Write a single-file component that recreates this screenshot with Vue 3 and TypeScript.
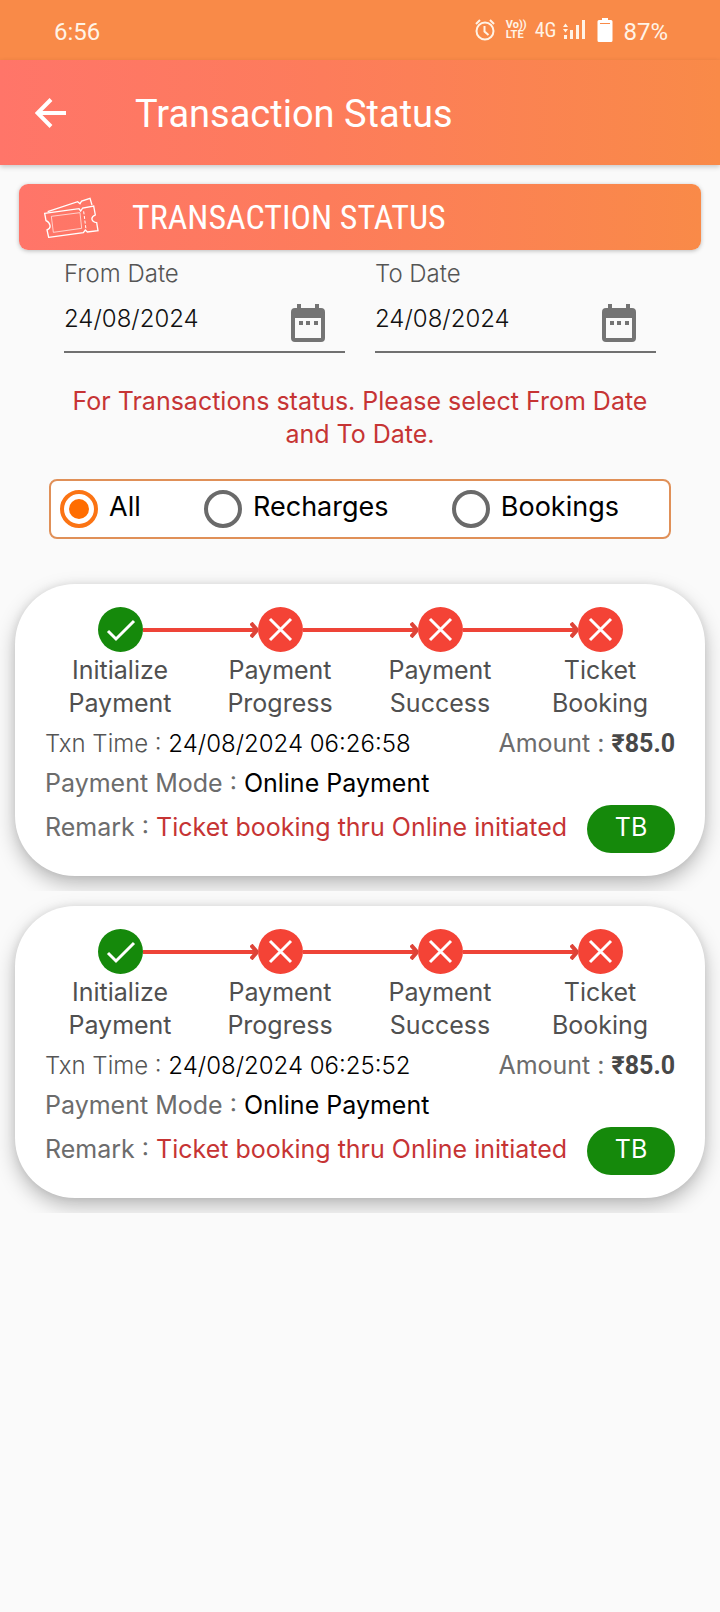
<script setup lang="ts">
import { ref } from 'vue'

interface Step {
  top: string
  bottom: string
  done: boolean
}

interface Transaction {
  time: string
  amount: string
  mode: string
  remark: string
  tag: string
  steps: Step[]
}

const steps: Step[] = [
  { top: 'Initialize', bottom: 'Payment', done: true },
  { top: 'Payment', bottom: 'Progress', done: false },
  { top: 'Payment', bottom: 'Success', done: false },
  { top: 'Ticket', bottom: 'Booking', done: false },
]

const fromDate = ref('24/08/2024')
const toDate = ref('24/08/2024')
const filter = ref('All')
const filters = ['All', 'Recharges', 'Bookings']

const transactions: Transaction[] = ['24/08/2024 06:26:58', '24/08/2024 06:25:52'].map((time) => ({
  time,
  amount: '₹85.0',
  mode: 'Online Payment',
  remark: 'Ticket booking thru Online initiated',
  tag: 'TB',
  steps,
}))
</script>

<template>
  <div class="page">
    <div class="status-bar">
      <span class="clock">6:56</span>
      <div class="indicators">
        <svg width="20" height="22" viewBox="0 0 20 22" fill="none" stroke="#fff3e6" stroke-width="2">
          <circle cx="10" cy="12" r="8.5" />
          <path d="M9.5 7v5.5l4 3.5M1 5l4-4M19 5l-4-4" />
        </svg>
        <span class="volte"><span>Vo))</span><span>LTE</span></span>
        <span class="network">4G</span>
        <svg class="signal" width="22" height="20" viewBox="0 0 22 20" fill="#fff3e6">
          <path d="M0 7l2.500-3.500L5 7zM0 9h5l-2.500 3.500zM1 15h3v4H1zM7 10h3v9H7zM13 5h3v14h-3zM19 0h3v19h-3z" />
        </svg>
        <svg class="battery" width="16" height="24" viewBox="0 0 16 24">
          <path d="M5 0h6v2h3a1.500 1.500 0 0 1 1.500 1.500v19A1.500 1.500 0 0 1 14 24H2a1.500 1.500 0 0 1-1.500-1.500v-19A1.500 1.500 0 0 1 2 2h3z" fill="#fff" />
          <path d="M3 5h10v1H3z" fill="#f98a48" />
        </svg>
        <span class="level">87%</span>
      </div>
    </div>

    <header class="app-bar">
      <button class="back" type="button" aria-label="Back">
        <svg width="32" height="30" viewBox="0 0 32 30" fill="none" stroke="#fff" stroke-width="4">
          <path d="M31 15H3M16 1.500L2.500 15 16 28.500" />
        </svg>
      </button>
      <h1>Transaction Status</h1>
    </header>

    <main>
      <div class="banner">
        <svg width="56" height="42" viewBox="0 0 168 126" fill="none" stroke="#fff" stroke-width="4">
          <path d="M5 52L108 38l5 7 6-9 33-6 5 27q-12 5-10 13t14 10l4 24-32 4-6-6-6 8L17 124l-5-22q11-4 9-14T9 74z" />
          <path d="M14 47L104 17l7 6 5-8 25-8 6 20" />
          <path d="M25 61L111 50 116 97 31 109z" stroke-width="2" />
          <path d="M122 46l7 54" stroke-width="3" stroke-dasharray="9 5" />
        </svg>
        <h2>TRANSACTION STATUS</h2>
      </div>

      <form class="search" @submit.prevent>
        <div class="dates">
          <div class="field">
            <label for="from-date">From Date</label>
            <div class="entry">
              <input id="from-date" v-model="fromDate" type="text" />
              <button type="button" aria-label="Choose from date">
                <svg width="34" height="38" viewBox="0 0 34 38" fill="#747474">
                  <path fill-rule="evenodd" d="M6 0h4v4h14V0h4v4h2a4 4 0 0 1 4 4v26a4 4 0 0 1-4 4H4a4 4 0 0 1-4-4V8a4 4 0 0 1 4-4h2zM4 14v20h26V14z" />
                  <path d="M8 17h4v4H8zM15 17h4v4h-4zM23 17h4v4h-4z" />
                </svg>
              </button>
            </div>
          </div>
          <div class="field">
            <label for="to-date">To Date</label>
            <div class="entry">
              <input id="to-date" v-model="toDate" type="text" />
              <button type="button" aria-label="Choose to date">
                <svg width="34" height="38" viewBox="0 0 34 38" fill="#747474">
                  <path fill-rule="evenodd" d="M6 0h4v4h14V0h4v4h2a4 4 0 0 1 4 4v26a4 4 0 0 1-4 4H4a4 4 0 0 1-4-4V8a4 4 0 0 1 4-4h2zM4 14v20h26V14z" />
                  <path d="M8 17h4v4H8zM15 17h4v4h-4zM23 17h4v4h-4z" />
                </svg>
              </button>
            </div>
          </div>
        </div>

        <p class="notice">For Transactions status. Please select From Date<br />and To Date.</p>

        <div class="filters" role="radiogroup" aria-label="Transaction type">
          <label v-for="name in filters" :key="name">
            <input v-model="filter" type="radio" name="kind" :value="name" />
            <span>{{ name }}</span>
          </label>
        </div>
      </form>

      <section v-for="item in transactions" :key="item.time" class="slot">
        <article class="card">
          <ol class="steps">
            <li v-for="(step, index) in item.steps" :key="index">
              <div class="track">
                <span class="rail" :class="{ empty: index === 0 }">
                  <svg v-if="index > 0" width="8" height="16" viewBox="0 0 8 16" fill="none" stroke="#dd4438" stroke-width="4">
                    <path d="M1 1l6 7-6 7" />
                  </svg>
                </span>
                <svg width="45" height="45" viewBox="0 0 45 45" fill="none" stroke="#fff" stroke-width="3">
                  <circle cx="22.500" cy="22.500" r="22.500" :fill="step.done ? '#15890b' : '#f44336'" stroke="none" />
                  <path v-if="step.done" d="M10 24l8 8 18-18" />
                  <path v-else d="M12 12l21 21M33 12L12 33" />
                </svg>
                <span class="rail" :class="{ empty: index === item.steps.length - 1 }"></span>
              </div>
              <span class="caption">{{ step.top }}<br />{{ step.bottom }}</span>
            </li>
          </ol>
          <div class="row">
            <p class="time"><span class="key">Txn Time : </span>{{ item.time }}</p>
            <p><span class="key">Amount : </span><strong>{{ item.amount }}</strong></p>
          </div>
          <div class="row">
            <p><span class="key">Payment Mode : </span>{{ item.mode }}</p>
          </div>
          <div class="row last">
            <p><span class="key">Remark : </span><span class="remark">{{ item.remark }}</span></p>
            <button type="button">{{ item.tag }}</button>
          </div>
        </article>
      </section>
    </main>
  </div>
</template>

<style>
body {
  margin: 0;
  background: #fafafa;
}
</style>

<style scoped>
* {
  box-sizing: border-box;
}

.page {
  min-height: 100vh;
  background: #fafafa;
  color: #000;
  font-family: Inter, 'Noto Sans', sans-serif;
  font-size: 25px;
  font-weight: 400;
}

h1,
h2,
p,
ol {
  margin: 0;
  padding: 0;
}

button {
  border: 0;
  padding: 0;
  background: none;
  font: inherit;
}

svg {
  display: block;
  flex: none;
}

.status-bar {
  display: flex;
  align-items: center;
  justify-content: space-between;
  height: 60px;
  padding: 0 52px 0 54px;
  background: #f98a48;
  color: #fff3e6;
  font-family: Roboto, sans-serif;
  font-size: 24px;
}

.clock,
.level {
  padding-top: 3px;
}

.indicators {
  display: flex;
  align-items: center;
}

.volte {
  display: flex;
  flex-direction: column;
  margin-left: 11px;
  font-size: 11px;
  font-weight: 700;
  line-height: 10px;
}

.network {
  margin-left: 8px;
  font-family: 'Roboto Condensed', Roboto, sans-serif;
  font-size: 20px;
}

.signal {
  margin-left: 7px;
}

.battery {
  margin-left: 12px;
}

.level {
  margin-left: 10px;
}

.app-bar {
  display: flex;
  align-items: center;
  height: 105px;
  padding: 0 35px;
  background: linear-gradient(to right, #ff7569, #fd7c5b 45%, #f98a48);
  box-shadow: 0 2px 5px rgba(0, 0, 0, 0.2);
}

.back {
  width: 100px;
  flex: none;
}

h1 {
  padding-top: 3px;
  color: #fff;
  font-family: Roboto, sans-serif;
  font-size: 38px;
  font-weight: 400;
}

.banner {
  display: flex;
  align-items: center;
  height: 66px;
  margin: 19px 19px 0;
  padding: 0 24px;
  border-radius: 9px;
  background: linear-gradient(to right, #ff7569, #fd7c5b 45%, #f98a48);
  box-shadow: 0 1px 4px rgba(0, 0, 0, 0.25);
}

h2 {
  margin-left: 33px;
  color: #fff;
  font-family: 'Roboto Condensed', Roboto, sans-serif;
  font-size: 34px;
  font-weight: 400;
}

.dates {
  display: grid;
  grid-template-columns: minmax(0, 1fr) minmax(0, 1fr);
  gap: 30px;
  padding: 8px 64px 0;
  font-size: 24px;
  font-weight: 300;
}

.field label {
  display: block;
  color: #555;
  line-height: 32px;
}

.entry {
  display: flex;
  align-items: center;
  justify-content: space-between;
  height: 63px;
  padding: 4px 20px 0 0;
  border-bottom: 2px solid #707070;
}

.entry input {
  min-width: 0;
  flex: 1;
  padding: 0 0 8px;
  border: 0;
  outline: 0;
  background: none;
  color: #111;
  font: inherit;
}

.notice {
  padding: 32px 20px 0;
  color: #c63434;
  line-height: 33px;
  text-align: center;
}

.filters {
  display: flex;
  align-items: center;
  justify-content: space-between;
  height: 60px;
  margin: 28px 49px 0;
  padding: 0 50px 0 9px;
  border: 2px solid #e09058;
  border-radius: 8px;
  background: #fff;
  font-size: 27px;
}

.filters label {
  display: flex;
  align-items: center;
  gap: 11px;
}

.filters span {
  padding-bottom: 5px;
}

.filters input {
  display: grid;
  place-items: center;
  width: 38px;
  height: 38px;
  margin: 0;
  border: 4px solid #6a6a6a;
  border-radius: 50%;
  appearance: none;
}

.filters input:checked {
  border-color: #fb7414;
}

.filters input:checked::before {
  width: 20px;
  height: 20px;
  border-radius: 50%;
  background: #ff6d00;
  content: '';
}

.slot {
  overflow: hidden;
  padding: 15px;
}

form + .slot {
  margin-top: 30px;
}

.card {
  padding: 23px 30px;
  border-radius: 60px;
  background: #fff;
  box-shadow: 0 8px 20px rgba(0, 0, 0, 0.26), 0 0 8px rgba(0, 0, 0, 0.08);
}

.steps {
  display: grid;
  grid-template-columns: repeat(4, 1fr);
  margin: 0 -5px 2px;
  list-style: none;
}

.track {
  display: flex;
  align-items: center;
}

.rail {
  display: flex;
  align-items: center;
  justify-content: flex-end;
  flex: 1;
  height: 4px;
  background: #ee4438;
}

.rail.empty {
  background: none;
}

.caption {
  display: block;
  padding-top: 2px;
  color: #505050;
  line-height: 33px;
  text-align: center;
}

.row {
  display: flex;
  align-items: center;
  justify-content: space-between;
  height: 40px;
  padding-top: 2px;
  white-space: pre;
}

.row.last {
  height: 48px;
  padding-top: 0;
  margin-top: 3px;
}

.last p {
  padding-bottom: 4px;
}

.time {
  font-size: 24px;
  font-weight: 300;
}

.key {
  color: #6c6c6c;
}

.time .key {
  color: #555;
}

.remark {
  color: #c63434;
}

strong {
  color: #484848;
  font-family: Roboto, sans-serif;
  font-weight: 700;
}

.last button {
  width: 88px;
  height: 48px;
  padding-bottom: 4px;
  border-radius: 24px;
  background: #15890b;
  color: #fff;
}
</style>
